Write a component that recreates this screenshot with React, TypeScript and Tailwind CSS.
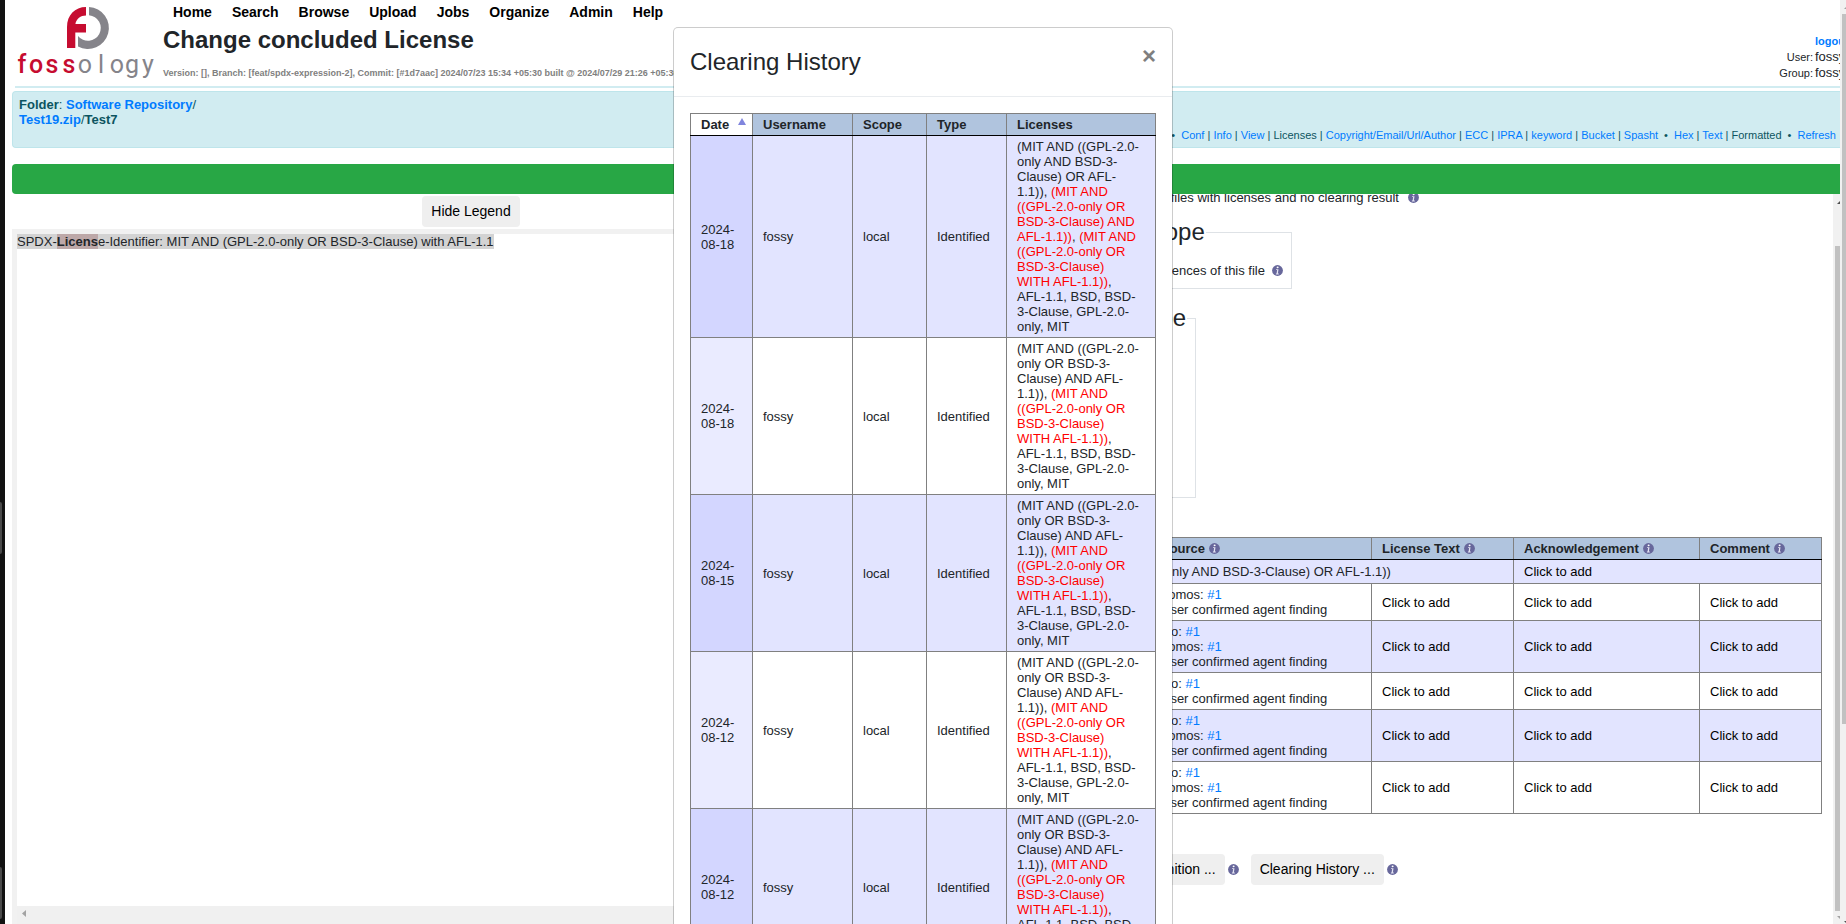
import React from "react";

const NAV = ["Home", "Search", "Browse", "Upload", "Jobs", "Organize", "Admin", "Help"];

function InfoIcon() {
  return (
    <svg viewBox="0 0 11 11" className="inline-block h-[11px] w-[11px] shrink-0" aria-label="info" role="img">
      <circle cx="5.5" cy="5.5" r="5.4" fill="#67679b" />
      <ellipse cx="5.6" cy="2.3" rx="1" ry="0.9" fill="#fff" />
      <path d="M4 4.2h2.5L5.9 8.6h.9v.8H3.9v-.8h.7l.5-3.5H4z" fill="#e4e4f2" />
    </svg>
  );
}

function Logo() {
  const letters: [string, number, boolean][] = [
    ["f", 22, true],
    ["o", 36, true],
    ["s", 52, true],
    ["s", 69, true],
    ["o", 85, false],
    ["l", 101, false],
    ["o", 117, false],
    ["g", 132, false],
    ["y", 148, false],
  ];
  return (
    <svg viewBox="12 0 151 86" className="h-[86px] w-[151px] shrink-0" role="img" aria-label="fossology">
      <path d="M67 48V27C67 15 75 7 86 7v8.600c-5.500 0-9.600 3.400-10.600 8.400H86v8.600H75.300V48z" fill="#c60c30" />
      <path d="M89 7a21 21 0 1 1-11 39.500V36a12.800 12.800 0 1 0 11-20.800z" fill="#85848a" />
      {letters.map(([ch, x, red]) => (
        <text
          key={x}
          x={x}
          y={73}
          textAnchor="middle"
          fontFamily="Roboto, sans-serif"
          fontSize="25"
          fontWeight={red ? 500 : 400}
          fill={red ? "#c60c30" : "#85848a"}
        >
          {ch}
        </text>
      ))}
    </svg>
  );
}

function Link({ children }: { children: React.ReactNode }) {
  return (
    <a href="#" className="text-[#007bff]">
      {children}
    </a>
  );
}

function Bullet() {
  return <span className="mx-[6px]">•</span>;
}

const TAIL = ", AFL-1.1, BSD, BSD-3-Clause, GPL-2.0-only, MIT";
const WITH_EXPR = "(MIT AND ((GPL-2.0-only OR BSD-3-Clause) WITH AFL-1.1))";
const AND_EXPR = "(MIT AND ((GPL-2.0-only OR BSD-3-Clause) AND AFL-1.1))";
const OR_EXPR = "(MIT AND ((GPL-2.0-only AND BSD-3-Clause) OR AFL-1.1))";

const HISTORY = [
  { date: "2024-08-18", added: OR_EXPR, removed: [AND_EXPR, WITH_EXPR] },
  { date: "2024-08-18", added: AND_EXPR, removed: [WITH_EXPR] },
  { date: "2024-08-15", added: AND_EXPR, removed: [WITH_EXPR] },
  { date: "2024-08-12", added: AND_EXPR, removed: [WITH_EXPR] },
  { date: "2024-08-12", added: AND_EXPR, removed: [WITH_EXPR] },
];

function HistoryDialog() {
  const cell = "border border-[#808080] px-[10px] py-[3px]";
  return (
    <div className="pointer-events-none absolute inset-0 overflow-hidden">
      <div
        role="dialog"
        aria-labelledby="history-title"
        className="pointer-events-auto mx-auto mt-[27px] w-[500px] rounded-[5px] border border-black/20 bg-white bg-clip-padding"
      >
        <div className="flex items-start justify-between border-b border-[#e9ecef] p-4">
          <h2 id="history-title" className="py-[3px] text-[24px] leading-[30px]">
            Clearing History
          </h2>
          <button type="button" aria-label="Close" className="text-[24px] leading-[24px] font-bold text-[#7f7f7f]">
            ×
          </button>
        </div>
        <div className="p-4">
          <table className="w-full table-fixed border-collapse">
            <colgroup>
              <col className="w-[62px]" />
              <col className="w-[100px]" />
              <col className="w-[74px]" />
              <col className="w-[80px]" />
              <col />
            </colgroup>
            <thead>
              <tr className="bg-[#b0c4de] text-left">
                <th className={`${cell} relative border-b-black bg-white`}>
                  Date
                  <svg viewBox="0 0 8 7" className="absolute top-[4px] right-[6px] h-[7px] w-[8px]" aria-hidden="true">
                    <path d="M4 0l4 7H0z" fill="#8085dd" />
                  </svg>
                </th>
                <th className={`${cell} border-b-black`}>Username</th>
                <th className={`${cell} border-b-black`}>Scope</th>
                <th className={`${cell} border-b-black`}>Type</th>
                <th className={`${cell} border-b-black`}>Licenses</th>
              </tr>
            </thead>
            <tbody>
              {HISTORY.map((row, i) => (
                <tr key={i} className={i % 2 === 0 ? "bg-[#e2e4ff]" : "bg-white"}>
                  <td className={`${cell} ${i % 2 === 0 ? "bg-[#d3d6ff]" : "bg-[#eaebff]"}`}>{row.date}</td>
                  <td className={cell}>fossy</td>
                  <td className={cell}>local</td>
                  <td className={cell}>Identified</td>
                  <td className="border border-[#808080] py-[3px] pr-[15px] pl-[10px]">
                    {row.added}
                    {row.removed.map((expr) => (
                      <React.Fragment key={expr}>
                        , <span className="text-[#ff0000]">{expr}</span>
                      </React.Fragment>
                    ))}
                    {TAIL}
                  </td>
                </tr>
              ))}
            </tbody>
          </table>
        </div>
      </div>
    </div>
  );
}

const FINDINGS = [["nomos"], ["ojo", "nomos"], ["ojo"], ["ojo", "nomos"], ["ojo", "nomos"]];

function LicenseTable() {
  const cell = "border border-[#808080] px-[10px] py-[3px]";
  const head = `${cell} border-b-black`;
  const edit = (
    <button type="button" className="text-black">
      Click to add
    </button>
  );
  return (
    <table className="mt-[39px] w-full table-fixed border-collapse">
      <colgroup>
        <col className="w-[94px]" />
        <col className="w-[118px]" />
        <col className="w-[221px]" />
        <col className="w-[142px]" />
        <col className="w-[186px]" />
        <col className="w-[122px]" />
      </colgroup>
      <thead>
        <tr className="bg-[#b0c4de] text-left">
          <th className={head}>Action</th>
          <th className={head}>License</th>
          {["Source", "License Text", "Acknowledgement", "Comment"].map((name) => (
            <th key={name} className={head}>
              <span className="flex items-center gap-[4px]">
                {name}
                <InfoIcon />
              </span>
            </th>
          ))}
        </tr>
      </thead>
      <tbody>
        <tr className="h-6 bg-[#e2e4ff]">
          <td className={cell} />
          <td className={cell} colSpan={3}>
            {OR_EXPR}
          </td>
          <td className={cell} colSpan={2}>
            {edit}
          </td>
        </tr>
        {FINDINGS.map((agents, i) => (
          <tr key={i} className={i % 2 === 0 ? "bg-white" : "bg-[#e2e4ff]"}>
            <td className={cell} />
            <td className={cell} />
            <td className={cell}>
              {agents.map((agent) => (
                <div key={agent}>
                  {agent}: <Link>#1</Link>
                </div>
              ))}
              <div>User confirmed agent finding</div>
            </td>
            <td className={cell}>{edit}</td>
            <td className={cell}>{edit}</td>
            <td className={cell}>{edit}</td>
          </tr>
        ))}
      </tbody>
    </table>
  );
}

export default function App() {
  const button = "h-[31px] rounded-[4px] bg-[#efefef] px-[9px] text-[14px] text-black";
  return (
    <div className="relative flex h-screen overflow-hidden bg-white font-['Liberation_Sans',Arial,sans-serif] text-[13px] leading-[15px] text-[#212529]">
      <div className="flex w-[5px] shrink-0 flex-col justify-end gap-[313px] bg-[#121212] pb-[5px]">
        <div className="h-[52px] w-[2px] rounded-r-[2px] bg-[#4a4a4a]" />
        <div className="h-[52px] w-[2px] rounded-r-[2px] bg-[#4a4a4a]" />
      </div>

      <div className="flex min-w-0 flex-1 flex-col overflow-hidden pl-[7px]">
        <header className="flex shrink-0">
          <Logo />
          <div className="min-w-0 flex-1 pt-0.5">
            <nav className="flex text-[14px] leading-5 font-bold text-black">
              {NAV.map((item) => (
                <a key={item} href="#" className="px-[10px]">
                  {item}
                </a>
              ))}
            </nav>
            <h1 className="mt-[3px] text-[24px] leading-[29px] font-bold">Change concluded License</h1>
            <p className="mt-[14px] text-[9px] leading-[11px] font-bold whitespace-nowrap text-[#808080]">
              Version: [], Branch: [feat/spdx-expression-2], Commit: [#1d7aac] 2024/07/23 15:34 +05:30 built @ 2024/07/29
              21:26 +05:30
            </p>
          </div>
          <div className="-mr-[9px] grid grid-cols-[auto_34px] content-start items-baseline gap-x-[2px] pt-[33px] text-right text-[11px] leading-4">
            <span />
            <a href="#" className="text-left font-bold text-[#007bff]">
              logout
            </a>
            <span>User:</span>
            <span className="text-left text-[13px]">fossy</span>
            <span>Group:</span>
            <span className="text-left text-[13px]">fossy</span>
          </div>
        </header>

        <div className="ml-[3px] h-[2px] shrink-0 bg-[#d1ecf1]" />

        <div className="mt-[3px] flex h-[57px] shrink-0 justify-between rounded-l-[4px] border border-r-0 border-[#bee5eb] bg-[#d1ecf1] pr-[4px] pl-[6px] text-[#0c5460]">
          <div className="pt-[5px]">
            <b>Folder</b>:{" "}
            <b>
              <Link>Software Repository</Link>
            </b>
            /<br />
            <b>
              <Link>Test19.zip</Link>
            </b>
            /<b>Test7</b>
          </div>
          <div className="self-end pb-[4px] text-[11px] whitespace-nowrap">
            <Bullet />
            <Link>Conf</Link> | <Link>Info</Link> | <Link>View</Link> | Licenses |{" "}
            <Link>Copyright/Email/Url/Author</Link> | <Link>ECC</Link> | <Link>IPRA</Link> | <Link>keyword</Link> |{" "}
            <Link>Bucket</Link> | <Link>Spasht</Link>
            <Bullet />
            <Link>Hex</Link> | <Link>Text</Link> | Formatted
            <Bullet />
            <Link>Refresh</Link>
          </div>
        </div>

        <div className="mt-4 h-[30px] shrink-0 rounded-l-[4px] bg-[#28a745]" />

        <div className="flex min-h-0 flex-1">
          <section className="flex min-w-0 flex-[459] flex-col pt-[2px]">
            <div className="text-center">
              <button type="button" className={button}>
                Hide Legend
              </button>
            </div>
            <div className="mt-[2px] flex flex-1 flex-col border-t-[5px] border-l-[5px] border-[#f1f1f1]">
              <div className="flex-1">
                <span className="inline-block bg-[#d3d3d3]">
                  SPDX-<b className="inline-block bg-[#bda8a8]">Licens</b>e-Identifier: MIT AND (GPL-2.0-only OR BSD-3-Clause) with
                  AFL-1.1
                </span>
              </div>
              <div className="flex h-[18px] items-center bg-[#f0f0f0] pb-[3px] pl-[5px]">
                <svg viewBox="0 0 4 7" className="h-[7px] w-[4px]" aria-hidden="true">
                  <path d="M4 0v7L0 3.500z" fill="#a3a3a3" />
                </svg>
              </div>
            </div>
          </section>

          <section className="flex min-w-0 flex-[455] overflow-hidden">
            <div className="-mt-1 min-w-0 flex-1 pr-[11px] pl-2">
              <div className="flex w-[481px] items-center justify-end gap-[9px]">
                <span>Go through only files with licenses and no clearing result</span>
                <InfoIcon />
              </div>
              <fieldset className="mt-[9px] h-[75px] w-[354px] border border-[#dee2e6] px-[8px]">
                <legend className="pr-px pl-[3px] text-[24px] leading-9 whitespace-nowrap">Clearing decision scope</legend>
                <div className="flex items-center justify-end gap-[7px] pt-[13px]">
                  <span>Apply to all occurences of this file</span>
                  <InfoIcon />
                </div>
              </fieldset>
              <fieldset className="mt-[11px] h-[198px] w-[257px] border border-[#dee2e6] px-[8px]">
                <legend className="pr-px pl-[3px] text-[24px] leading-9 whitespace-nowrap">Clearing decision type</legend>
              </fieldset>
              <LicenseTable />
              <div className="mt-10 flex items-center gap-[3px] pl-[148px]">
                <button type="button" className={button}>
                  Bulk Recognition ...
                </button>
                <InfoIcon />
                <button type="button" className={`${button} ml-[9px]`}>
                  Clearing History ...
                </button>
                <InfoIcon />
              </div>
            </div>
            <div className="flex w-[7px] shrink-0 flex-col justify-between bg-[#f1f1f1] pt-[7px] pb-[5px] pl-[2px]">
              <svg viewBox="0 0 5 3" className="h-[3px] w-[5px]" aria-hidden="true">
                <path d="M2 3l3-3v3z" fill="#505050" />
              </svg>
              <div className="mt-[42px] mb-[5px] flex-1 bg-[#c1c1c1]" />
              <svg viewBox="0 0 5 3" className="h-[3px] w-[5px]" aria-hidden="true">
                <path d="M2 0h3v3z" fill="#a3a3a3" />
              </svg>
            </div>
          </section>
        </div>
      </div>

      <div className="flex w-[6px] shrink-0 flex-col bg-[#f1f1f1] pt-[6px] pl-[2px]">
        <svg viewBox="0 0 4 3" className="h-[3px] w-[4px] shrink-0" aria-hidden="true">
          <path d="M2 3l2-2v2z" fill="#a3a3a3" />
        </svg>
        <div className="mt-[5px] h-[710px] bg-[#c1c1c1]" />
        <svg viewBox="0 0 4 3" className="mt-auto h-[3px] w-[4px] shrink-0" aria-hidden="true">
          <path d="M2 0h2v2z" fill="#505050" />
        </svg>
      </div>

      <HistoryDialog />
    </div>
  );
}
